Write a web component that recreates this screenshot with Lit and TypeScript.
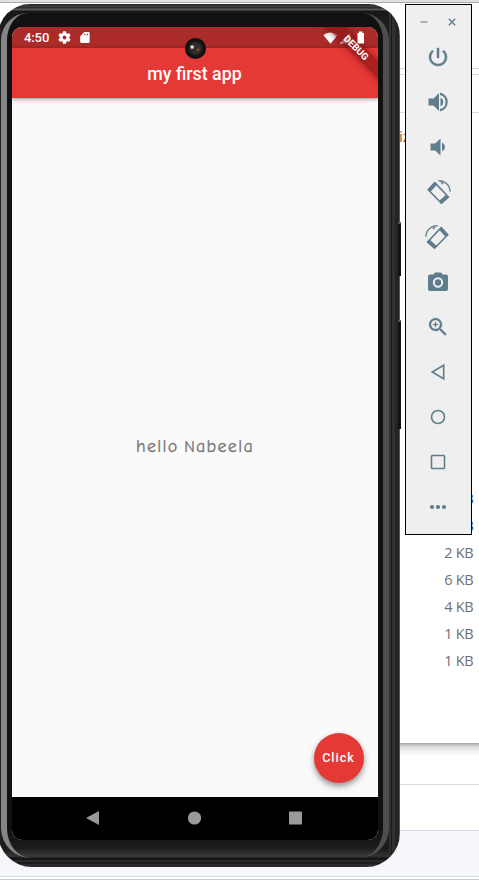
import { LitElement, html, css, svg } from "lit";
import { customElement } from "lit/decorators.js";

const rotated = svg`
  <path d="M8.800 2.600 22.500 17 15.400 23.200 2.200 9.700z" fill="none" stroke="currentColor" stroke-width="1.600" stroke-linejoin="round"/>
  <path d="M8.800 2 11.200 4.400 4.500 11.800 1.600 9.700zM20.300 14.500 23.100 17 15.400 23.900 12.800 21.300z"/>
  <path d="M12.200 .8C18.500 0 23.800 5 24.200 11.700" fill="none" stroke="currentColor" stroke-width="1.300"/>
  <path d="M13.500 .6l4.500 2.600-1.800 1.200z"/>`;

const tools = [
  // power
  svg`<path d="M13 3h-2v10h2V3zm4.830 2.170-1.420 1.420A6.920 6.920 0 0 1 19 12a7 7 0 1 1-11.420-5.420L6.170 5.170A8.930 8.930 0 0 0 3 12a9 9 0 1 0 14.830-6.830z" stroke="currentColor" stroke-width=".5"/>`,
  // volume up
  svg`<path d="M2.500 8.500v7h5L13 21V3L7.500 8.500zM14.500 7.500v9a5 5 0 0 0 0-9zM14 2.500v2.400a7.300 7.300 0 0 1 0 14.200v2.400a9.700 9.700 0 0 0 0-19z"/>`,
  // volume down
  svg`<path d="M4.500 8.500v7h4.700L14.500 20.500v-17L9.200 8.500zM16 7.800v8.400a4.500 4.500 0 0 0 0-8.400z"/>`,
  // rotate left
  rotated,
  // rotate right
  svg`<g transform="matrix(-1 0 0 1 24 0)">${rotated}</g>`,
  // camera
  svg`<path fill-rule="evenodd" d="M9 2.500 7.200 4.500H4a2 2 0 0 0-2 2V19a2 2 0 0 0 2 2h16a2 2 0 0 0 2-2V6.500a2 2 0 0 0-2-2h-3.200L15 2.500zm3 4.800a5.200 5.200 0 1 1 0 10.400 5.200 5.200 0 0 1 0-10.400z"/><circle cx="12" cy="12.500" r="3.200"/>`,
  // zoom
  svg`<path d="M15.500 14h-.79l-.28-.27A6.470 6.470 0 0 0 16 9.500 6.500 6.500 0 1 0 9.500 16c1.610 0 3.090-.59 4.230-1.570l.27.28v.79l5 4.990L20.490 19zm-6 0a4.500 4.500 0 1 1 0-9 4.500 4.500 0 0 1 0 9zm.5-7H9v2H7v1h2v2h1v-2h2V9h-2z" stroke="currentColor" stroke-width=".3"/>`,
  // back
  svg`<path d="M17.700 5.200v13.600L6.200 12z" fill="none" stroke="currentColor" stroke-width="1.600"/>`,
  // home
  svg`<circle cx="12" cy="12" r="6.500" fill="none" stroke="currentColor" stroke-width="1.600"/>`,
  // overview
  svg`<rect x="5.500" y="5.500" width="13" height="13" rx=".8" fill="none" stroke="currentColor" stroke-width="1.600"/>`,
  // more
  svg`<circle cx="6" cy="12" r="2.100"/><circle cx="12" cy="12" r="2.100"/><circle cx="18" cy="12" r="2.100"/>`,
];

@customElement("emulator-toolbar")
export class EmulatorToolbar extends LitElement {
  static styles = css`
    :host { display: flex; flex-direction: column; box-sizing: border-box; width: 67px; height: 531px;
      border: 1px solid #000; background: #efefef; color: #607d8b; padding-right: 1px; }
    .window { height: 29px; display: flex; justify-content: center; gap: 18px; padding: 12px 0 0 0; box-sizing: border-box; }
    .window svg { width: 10px; height: 10px; }
    .tool { height: 45px; display: flex; align-items: center; justify-content: center; }
    .tool svg { width: 24px; height: 24px; fill: currentColor; display: block; overflow: visible; }
  `;
  render() {
    return html`
      <div class="window">
        <svg viewBox="0 0 10 10"><path d="M1.500 5h7" stroke="#93a6b0" stroke-width="1.600" /></svg>
        <svg viewBox="0 0 10 10"><path d="M1.800 1.800l6.400 6.400M8.200 1.800L1.800 8.200" stroke="currentColor" stroke-width="1.400" /></svg>
      </div>
      ${tools.map((t) => html`<div class="tool"><svg viewBox="0 0 24 24">${t}</svg></div>`)}
    `;
  }
}

@customElement("phone-screen")
export class PhoneScreen extends LitElement {
  static styles = css`
    :host { display: flex; flex-direction: column; position: relative; width: 366px; height: 813px;
      border-radius: 10px; overflow: hidden; background: #fafafa; font-family: Roboto, sans-serif; color: #fff; }
    .status { height: 21px; flex: none; background: #ab2b28; display: flex; align-items: center; padding: 0 12px; box-sizing: border-box; }
    .time { font-size: 13px; font-weight: 500; line-height: 21px; width: 34px; letter-spacing: -.1px; }
    .status svg { fill: #fff; display: block; }
    .gear { width: 13px; height: 13px; }
    .sd { width: 13px; height: 13px; margin-left: 7px; }
    .wifi { width: 15px; height: 14px; margin-left: auto; }
    .cell { width: 12px; height: 12px; margin-left: 1px; }
    .status .battery { width: 13px; height: 13px; margin: 0 -1px 0 3px; position: relative; z-index: 2; }
    .bar { height: 50px; flex: none; background: #e53935; display: flex; align-items: center; justify-content: center;
      font-size: 17.800px; font-weight: 500; box-shadow: 0 1px 4px rgba(0,0,0,.45); padding: 1px 1px 0 0; box-sizing: border-box; }
    .body { flex: 1; display: flex; align-items: center; justify-content: center; color: #757575; position: relative; }
    .hello { font-family: "Comic Neue", "Indie Flower", cursive; font-size: 18px; letter-spacing: 1.300px; white-space: pre;
      -webkit-text-stroke: .3px #757575; word-spacing: -4.500px; margin-top: -2px; }
    .small { font-size: 16px; }
    .fab { position: absolute; right: 14.500px; bottom: 14.500px; width: 50px; height: 50px; border-radius: 50%; background: #e53935;
      color: #fff; display: flex; align-items: center; justify-content: center; font-size: 12.500px; font-weight: 500;
      letter-spacing: 1px; box-shadow: 0 3px 5px rgba(0,0,0,.3), 0 4px 9px rgba(0,0,0,.15); }
    .nav { height: 43px; flex: none; background: #000; display: flex; align-items: center; justify-content: center; gap: 87.500px;
      padding: 0 2px 2px 0; box-sizing: border-box; }
    .nav svg { width: 14px; height: 14px; fill: #999; display: block; }
    .camera { position: absolute; left: 173px; top: 11px; width: 21px; height: 21px; border-radius: 50%;
      background: radial-gradient(circle at 34% 43%, #ddd 0 1px, transparent 2.500px), radial-gradient(circle at 62% 56%, #7b5135 0 1px, transparent 2px),
        radial-gradient(circle, #302c29 0 5px, #121212 8px, #0b0b0b); }
    .ribbon { position: absolute; right: -34px; top: 15px; width: 112px; height: 12px; background: rgba(140,20,20,.68); color: #fff;
      transform: rotate(45deg); text-align: center; font-size: 9.600px; line-height: 12.500px; font-weight: 700;
      box-shadow: 0 0 6px rgba(90,0,0,.6); z-index: 1; }
  `;
  render() {
    return html`
      <div class="status">
        <span class="time">4:50</span>
        <svg class="gear" viewBox="2 2 20 20"><path fill-rule="evenodd" d="M19.140 12.940c.04-.3.060-.61.060-.94s-.020-.64-.070-.94l2.030-1.580a.49.49 0 0 0 .12-.61l-1.920-3.320a.49.49 0 0 0-.59-.22l-2.390.96a7 7 0 0 0-1.620-.94l-.36-2.540a.48.48 0 0 0-.48-.41h-3.840a.48.48 0 0 0-.47.41l-.36 2.540c-.59.24-1.130.57-1.620.94l-2.390-.96a.48.48 0 0 0-.59.22L2.740 8.870a.48.48 0 0 0 .12.61l2.030 1.580a6 6 0 0 0 0 1.880l-2.030 1.580a.49.49 0 0 0-.12.61l1.920 3.320c.12.22.37.29.59.22l2.390-.96c.5.38 1.030.7 1.620.94l.36 2.540c.05.24.24.41.48.41h3.840c.24 0 .44-.17.47-.41l.36-2.540c.59-.24 1.130-.56 1.620-.94l2.390.96c.22.080.47 0 .59-.22l1.920-3.320a.48.48 0 0 0-.12-.61zM12 15a3 3 0 1 1 0-6 3 3 0 0 1 0 6z" /></svg>
        <svg class="sd" viewBox="0 0 24 24"><path fill-rule="evenodd" d="M19.500 2h-8L4 9.500V20c0 1.100.9 2 2 2h13.500c1.100 0 2-.9 2-2V4c0-1.100-.9-2-2-2zM12.500 8H11V5h1.500zm3 0H14V5h1.500zm3 0H17V5h1.500z" /></svg>
        <svg class="wifi" viewBox="0 0 15 14"><path d="M.5 4.200C4.500.6 10.500.6 14.500 4.200L7.500 12.800z" /></svg>
        <svg class="cell" viewBox="0 0 13 13"><path d="M.5 12.500 12 1v11.500z" /></svg>
        <svg class="battery" viewBox="0 0 13 13"><path d="M3.500 2H5V.5h3.500V2H10v10.500H3.500z" /></svg>
      </div>
      <div class="bar">my first app</div>
      <div class="body">
        <span class="hello">hello  <span class="small">N</span>abeela</span>
        <div class="fab">Click</div>
      </div>
      <div class="nav">
        <svg viewBox="0 0 14 14"><path d="M13 0v14L0 7z" /></svg>
        <svg viewBox="0 0 14 14"><circle cx="7.500" cy="7" r="6.600" /></svg>
        <svg viewBox="0 0 14 14"><rect x="0" y=".5" width="13" height="13" rx=".5" /></svg>
      </div>
      <div class="camera"></div>
      <div class="ribbon">DEBUG</div>
    `;
  }
}

@customElement("app-root")
export class AppRoot extends LitElement {
  static styles = css`
    :host { display: block; position: relative; width: 479px; height: 880px; overflow: hidden; background: #fff;
      font-family: "Noto Sans", sans-serif; }
    .desk { display: flex; flex-direction: column; height: 880px; }
    .top { height: 3px; box-sizing: border-box; background: #dfe2df; border-bottom: 1px solid #a9aba9; }
    .head { height: 65px; border-bottom: 1px solid #d5d5d5; }
    .sub { height: 5px; border-bottom: 1px solid #dcdcdc; }
    .tab { height: 37px; border-bottom: 1px solid #dcdcdc; }
    .label { height: 372px; padding: 12px 0 0 399px; box-sizing: border-box; font-size: 15px; line-height: 22px; color: #9a6a4a; }
    .sizes { display: flex; flex-direction: column; align-items: flex-end; padding-right: 5.500px; height: 258px; box-sizing: border-box;
      font: 14.500px/27px "Open Sans", "Noto Sans", sans-serif; color: #707070; letter-spacing: -.25px; }
    .blue { color: #2b5b9e; }
    .shade { height: 42px; box-sizing: border-box; border-bottom: 1px solid #d4dae4; background: linear-gradient(#9c9c9c 0, #b8b8b8 1px, #dedede 4px, #f5f5f5 9px, #fff 14px); }
    .gap { height: 45px; border-bottom: 1px solid #d4dae4; }
    .pale { height: 45px; background: #f6f7fa; border-bottom: 1px solid #d0d9e6; }
    .end { flex: 1; border-bottom: 1px solid #ccc; }
    .phone { position: absolute; left: -2px; top: 4px; width: 402px; height: 863px; box-sizing: border-box; border-radius: 32px 32px 34px 34px;
      background: linear-gradient(90deg, #222 0 3px, transparent 3px 391px, #303030 391px 393px, #1a1a1a 393px 394px, #303030 394px 397px, #242424 397px 401px, #555 401px),
        linear-gradient(#252525 0 1px, #444 2px, #262626 4px, #5a5a5a 5px, #555 6px, #181818 7px 9px, #1c1c1c 20px 845px, #333 852px, #0c0c0c 855px, #262626 856px, #2d2d2d 858px, #0c0c0c 859px, #2b2b2b 860px); padding: 9px 11px 9px 3px; }
    .ring { height: 100%; box-sizing: border-box; border-radius: 27px 27px 30px 30px; border-style: solid; border-width: 0 6px 0 6px;
      border-color: #4e4e4e #4e4e4e #4e4e4e #858585; padding: 14px 4px 18px 5px;
      background: linear-gradient(#111 0 815px, #1b1b1b 835px, #3a3a3a 843px, #222); }
    .button { position: absolute; left: 398px; width: 3px; background: #111; border-top: 2px solid #555; box-sizing: border-box; }
    .vol { top: 222px; height: 54px; }
    .power { top: 320px; height: 109px; }
    emulator-toolbar { position: absolute; left: 405px; top: 4px; }
  `;
  render() {
    return html`
      <div class="desk">
        <div class="top"></div>
        <div class="head"></div>
        <div class="sub"></div>
        <div class="tab"></div>
        <div class="label">iz</div>
        <div class="sizes">
          <span class="blue">KB</span><span class="blue">KB</span>
          <span>2 KB</span><span>6 KB</span><span>4 KB</span><span>1 KB</span><span>1 KB</span>
        </div>
        <div class="shade"></div>
        <div class="gap"></div>
        <div class="pale"></div>
        <div class="end"></div>
      </div>
      <div class="phone"><div class="ring"><phone-screen></phone-screen></div></div>
      <div class="button vol"></div>
      <div class="button power"></div>
      <emulator-toolbar></emulator-toolbar>
    `;
  }
}
